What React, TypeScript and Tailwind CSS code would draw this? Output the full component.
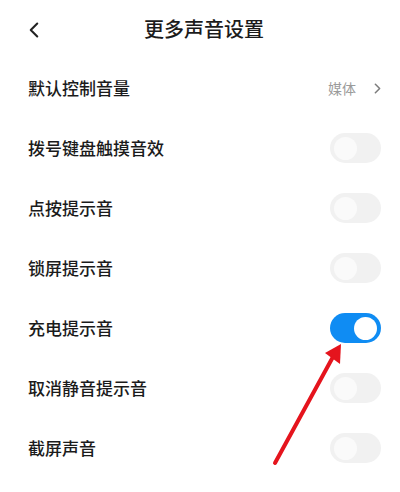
import { ChevronLeft, ChevronRight } from "lucide-react";

const rows: { label: string; on?: boolean }[] = [
  { label: "拨号键盘触摸音效" },
  { label: "点按提示音" },
  { label: "锁屏提示音" },
  { label: "充电提示音", on: true },
  { label: "取消静音提示音" },
  { label: "截屏声音" },
];

function Toggle({ on }: { on?: boolean }) {
  return (
    <div
      className={
        on
          ? "flex h-[30px] w-[51px] items-center justify-end rounded-full bg-[#0f8cf3] px-[4px]"
          : "flex h-[30px] w-[51px] items-center justify-start rounded-full bg-[#f1f1f1] px-[4px]"
      }
    >
      <div className={on ? "h-[23px] w-[23px] rounded-full bg-white" : "h-[23px] w-[23px] rounded-full bg-[#fafafa]"} />
    </div>
  );
}

export default function App() {
  return (
    <div
      className="relative h-[492px] w-[400px] overflow-hidden bg-white text-[#1b1b1b]"
      style={{ fontFamily: '"Noto Sans CJK SC", "Noto Sans", sans-serif' }}
    >
      <header className="relative flex h-[58px] items-center justify-center">
        <ChevronLeft className="absolute left-[21px] top-[17px] h-[26px] w-[26px] text-[#222]" strokeWidth={1.9} />
        <h1 className="pl-[8px] text-[20px] font-medium">更多声音设置</h1>
      </header>

      <div className="flex h-[60px] items-center justify-between pl-[28px] pr-[14px]">
        <span className="text-[17px] font-medium">默认控制音量</span>
        <div className="flex items-center gap-[13px]">
          <span className="text-[14px] text-[#9b9b9b]">媒体</span>
          <ChevronRight className="h-[17px] w-[17px] text-[#7d7d7d]" strokeWidth={2.2} />
        </div>
      </div>

      {rows.map((r) => (
        <div key={r.label} className="flex h-[60px] items-center justify-between pl-[28px] pr-[19px]">
          <span className="text-[17px] font-medium">{r.label}</span>
          <Toggle on={r.on} />
        </div>
      ))}

      <svg className="pointer-events-none absolute left-0 top-0" width="400" height="492" viewBox="0 0 400 492">
        <line x1="275" y1="463" x2="334" y2="355" stroke="#e5141d" strokeWidth="4" strokeLinecap="round" />
        <polygon points="341,344 325,353 340,364" fill="#e5141d" />
      </svg>
    </div>
  );
}
